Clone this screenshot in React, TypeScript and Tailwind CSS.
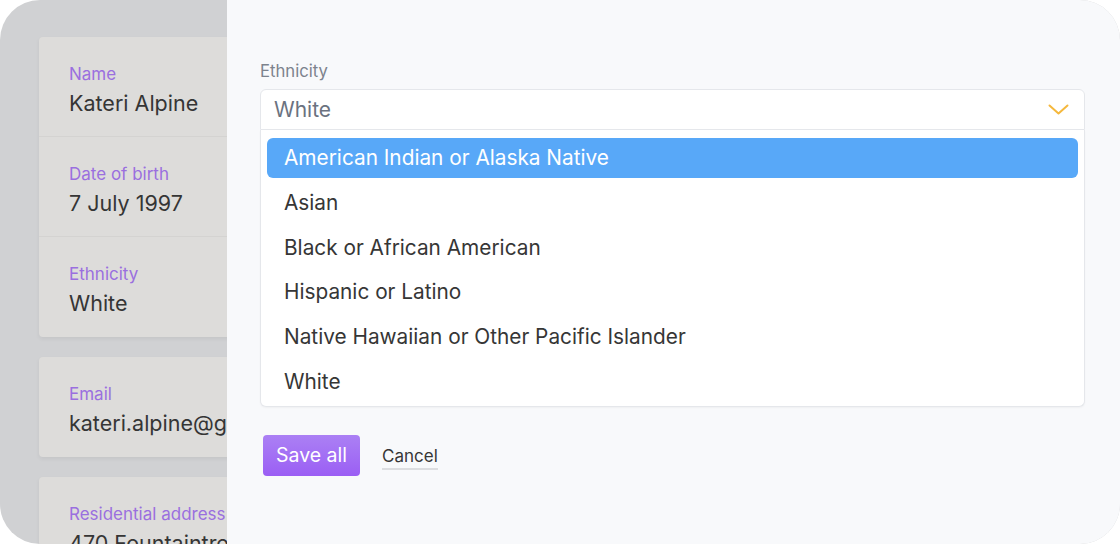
import React from "react";

const font = { fontFamily: "Inter, 'Noto Sans', sans-serif" };

function Row({ label, value, last }: { label: string; value: string; last?: boolean }) {
  return (
    <div className={`h-[100px] pl-[30px] pt-[24.5px] ${last ? "" : "border-b border-[#d4d3d1]"}`}>
      <div className="text-[17px] leading-[25px] text-[#9a6fdf] whitespace-nowrap">{label}</div>
      <div className="text-[21.5px] leading-[30px] text-[#353535] whitespace-nowrap mt-[1.5px]">{value}</div>
    </div>
  );
}

const options = [
  "American Indian or Alaska Native",
  "Asian",
  "Black or African American",
  "Hispanic or Latino",
  "Native Hawaiian or Other Pacific Islander",
  "White",
];

export default function App() {
  return (
    <div className="w-[1120px] h-[544px] bg-white" style={font}>
      <div className="h-full w-full rounded-[40px] overflow-hidden flex bg-[#d0d1d3]">
        <div className="w-[227px] shrink-0 overflow-hidden pl-[39px] pt-[37px]">
          <div className="w-[400px] flex flex-col gap-[20px]">
            <div className="bg-[#dddcda] rounded-[4px] shadow-[0_2px_4px_rgba(0,0,0,0.06)]">
              <Row label="Name" value="Kateri Alpine" />
              <Row label="Date of birth" value="7 July 1997" />
              <Row label="Ethnicity" value="White" last />
            </div>
            <div className="bg-[#dddcda] rounded-[4px] shadow-[0_2px_4px_rgba(0,0,0,0.06)]">
              <Row label="Email" value="kateri.alpine@gmail.com" last />
            </div>
            <div className="bg-[#dddcda] rounded-[4px] shadow-[0_2px_4px_rgba(0,0,0,0.06)]">
              <Row label="Residential address" value="470 Fountaintree Road" last />
            </div>
          </div>
        </div>
        <div className="flex-1 bg-[#f8f9fb] pl-[33px] pr-[35px] pt-[59px]">
          <div className="text-[16.7px] leading-[24px] text-[#7d838d]">Ethnicity</div>
          <div className="mt-[6px] h-[41px] bg-white border border-[#e5e7eb] rounded-t-[6px] flex items-center justify-between pl-[13px] pr-[15px]">
            <span className="text-[21px] leading-[28px] text-[#6b7280]">White</span>
            <svg width="21" height="11" viewBox="0 0 21 11" fill="none">
              <path d="M1.5 1.5 L10.5 9.5 L19.5 1.5" stroke="#f5b83d" strokeWidth="2" strokeLinecap="round" strokeLinejoin="round" />
            </svg>
          </div>
          <div className="bg-white border border-t-0 border-[#e5e7eb] rounded-b-[6px] px-[6px] pt-[8px] pb-[4px] flex flex-col gap-[4.75px] shadow-[0_1px_2px_rgba(0,0,0,0.04)]">
            {options.map((o, i) => (
              <div
                key={o}
                className={`h-[40px] flex items-center pl-[17px] rounded-[6px] text-[20.8px] leading-[28px] ${
                  i === 0 ? "bg-[#58a8f8] text-white" : "text-[#363636]"
                }`}
              >
                {o}
              </div>
            ))}
          </div>
          <div className="mt-[28px] flex items-center gap-[22px] pl-[3px]">
            <button className="h-[41px] px-[13px] rounded-[4px] text-white text-[19.5px] bg-gradient-to-b from-[#ab80f4] to-[#9b5ef4]">
              Save all
            </button>
            <button className="text-[17px] leading-[23px] text-[#363636] border-b-2 border-[#dcdde0] mt-[4px]">Cancel</button>
          </div>
        </div>
      </div>
    </div>
  );
}
